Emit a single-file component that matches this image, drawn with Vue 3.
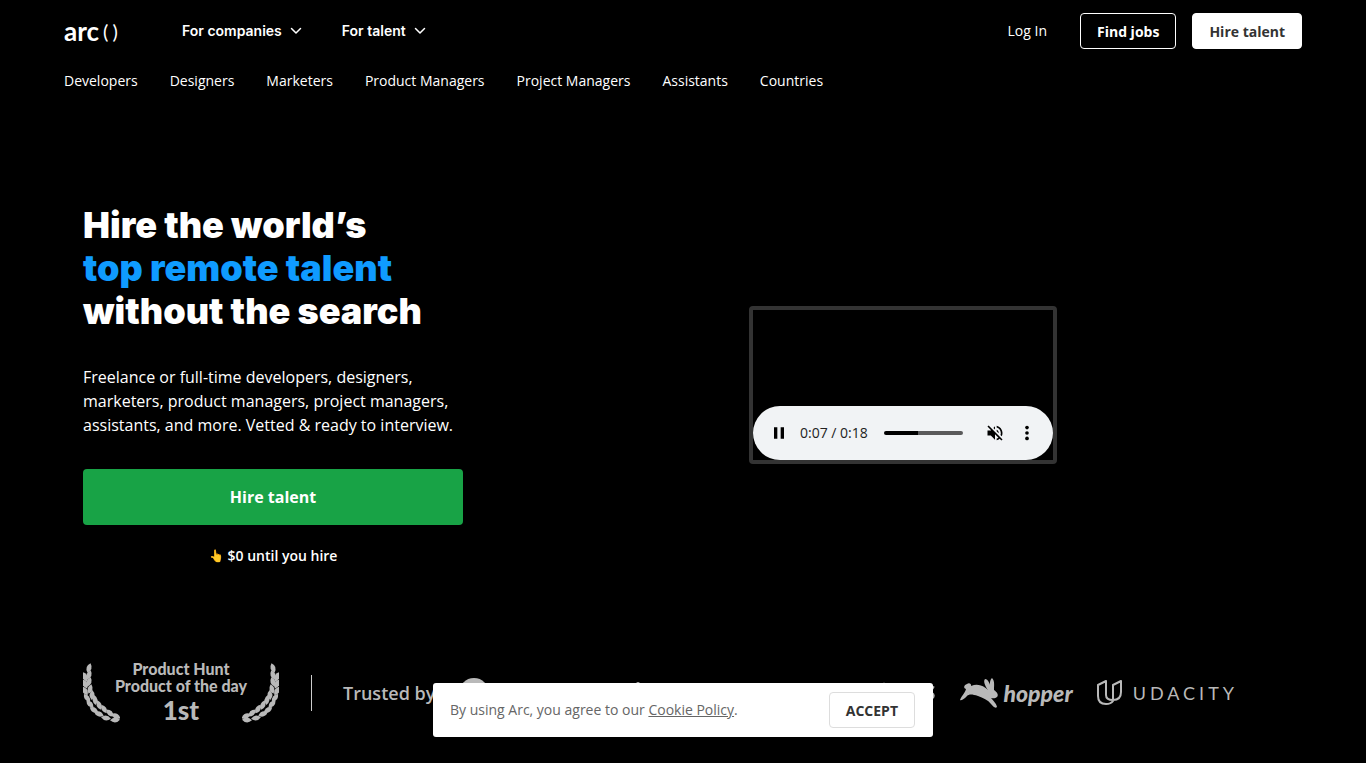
<script setup>
import { ref } from 'vue'

const categories = ['Developers', 'Designers', 'Marketers', 'Product Managers', 'Project Managers', 'Assistants', 'Countries']
const menus = ['For companies', 'For talent']
const progress = ref(43)

// x, y, rotation of each leaf of the laurel branch
const leaves = [
  [6, 5, 18], [6, 12, 20], [2, 14, -20], [6, 19, 20], [2, 21, -24], [7, 26, 16], [2, 28, -30],
  [9, 32, 4], [4, 35, -38], [12, 37, -8], [7, 41, -46], [16, 42, -20], [11, 47, -58],
  [21, 46, -32], [16, 51, -70], [27, 50, -44], [23, 55, -82], [33, 53, -62], [32, 57, -94],
]
</script>

<template>
  <div class="page">
    <header class="header">
      <div class="bar">
        <a class="brand" href="#">arc<span class="parens"><span>(</span><span>)</span></span></a>
        <nav class="menus">
          <button v-for="m in menus" :key="m" class="menu" type="button">
            {{ m }}
            <svg width="12" height="8" viewBox="0 0 12 8" aria-hidden="true">
              <path d="M1.5 1.5 6 6l4.500-4.500" fill="none" stroke="currentColor" stroke-width="1.500" stroke-linecap="round" stroke-linejoin="round" />
            </svg>
          </button>
        </nav>
        <div class="actions">
          <a class="login" href="#">Log In</a>
          <button class="btn outline" type="button">Find jobs</button>
          <button class="btn solid" type="button">Hire talent</button>
        </div>
      </div>
      <nav class="categories">
        <a v-for="c in categories" :key="c" href="#">{{ c }}</a>
      </nav>
    </header>

    <main>
      <section class="hero">
        <div class="pitch">
          <h1>Hire the world’s<br /><span>top remote talent</span><br />without the search</h1>
          <p class="lead">Freelance or full-time developers, designers, marketers, product managers, project managers, assistants, and more. Vetted &amp; ready to interview.</p>
          <button class="cta" type="button">Hire talent</button>
          <p class="note"><span class="emoji">👆</span>$0 until you hire</p>
        </div>
        <div class="media">
          <div class="player">
            <div class="controls">
              <button class="icon pause" type="button" aria-label="Pause">
                <svg width="20" height="20" viewBox="0 0 24 24"><path d="M6 19h4V5H6v14zm8-14v14h4V5h-4z" /></svg>
              </button>
              <span class="time">0:07 / 0:18</span>
              <input v-model="progress" type="range" min="0" max="100" aria-label="Seek" :style="{ '--played': progress + '%' }" />
              <button class="icon mute" type="button" aria-label="Unmute">
                <svg width="20" height="20" viewBox="0 0 24 24"><path d="M4.340 2.930 2.930 4.340 7.290 8.700 7 9H3v6h4l5 5v-6.590l4.180 4.180c-.65.49-1.380.88-2.180 1.110v2.060c1.340-.3 2.570-.92 3.610-1.750l2.050 2.050 1.410-1.410L4.340 2.930zM19 12c0 .82-.15 1.610-.41 2.340l1.530 1.530c.56-1.170.88-2.480.88-3.870 0-4.280-2.990-7.860-7-8.770v2.060c2.890.86 5 3.540 5 6.710zm-7-8-1.880 1.880L12 7.760V4zm4.500 8c0-1.770-1.020-3.290-2.500-4.030v1.790l2.480 2.480c.01-.08.02-.16.02-.24z" /></svg>
              </button>
              <button class="icon" type="button" aria-label="More options">
                <svg width="20" height="20" viewBox="0 0 24 24"><circle cx="12" cy="5.500" r="2.200" /><circle cx="12" cy="12" r="2.200" /><circle cx="12" cy="18.500" r="2.200" /></svg>
              </button>
            </div>
          </div>
        </div>
      </section>

      <section class="proof">
        <div class="award">
          <svg class="laurel" width="37" height="60" viewBox="0 0 37 60" aria-hidden="true">
            <path v-for="(l, i) in leaves" :key="i" d="M0-5Q5 0 0 5Q-5 0 0-5Z" :transform="`translate(${l[0]} ${l[1]}) rotate(${l[2]})`" />
          </svg>
          <div class="award-text">
            <span>Product Hunt</span>
            <span>Product of the day</span>
            <strong>1st</strong>
          </div>
          <svg class="laurel flip" width="37" height="60" viewBox="0 0 37 60" aria-hidden="true">
            <path v-for="(l, i) in leaves" :key="i" d="M0-5Q5 0 0 5Q-5 0 0-5Z" :transform="`translate(${l[0]} ${l[1]}) rotate(${l[2]})`" />
          </svg>
        </div>
        <div class="divider"></div>
        <span class="trusted">Trusted by</span>
        <div class="logos">
          <svg width="30" height="30" viewBox="0 0 30 30" aria-hidden="true"><circle cx="15" cy="15" r="15" /></svg>
          <svg class="second" width="100" height="24" viewBox="0 0 100 24" aria-hidden="true"><circle cx="50" cy="3" r="2" /></svg>
          <svg class="third" width="104" height="24" viewBox="0 0 104 24" aria-hidden="true">
            <path d="m52 1 1 3h3l-2 2 1 3-3-2-3 2 1-3-2-2h3z" />
            <path d="M102 7C96 4 93 11 98 12C104 13 101 20 94 17" fill="none" stroke="currentColor" stroke-width="3" />
          </svg>
          <span class="hopper">
            <svg width="39" height="31" viewBox="0 0 39 31" aria-hidden="true">
              <path d="M0 22C2 17 5 15 6 11C3 10 4 7 7 6C9 4 12 6 11 8C18 5 24 8 28 12C25 8 23 3 25 1C28 1 30 6 31 10C29 6 30 2 32 0C35 3 34 8 34 12C37 14 39 17 37 19C35 21 32 20 31 20C34 23 37 27 37 29C35 31 33 28 31 26C28 22 23 20 18 18C12 16 9 16 7 18C5 20 2 23 0 22Z" />
            </svg>
            hopper
          </span>
          <span class="udacity">
            <svg width="25" height="26" viewBox="0 0 25 26" aria-hidden="true">
              <path d="M1 5 9 1V15Q9 20 16 20V21Q14 24 9 24Q1 24 1 16ZM16 20V5L24 1V12Q24 20 16 20M9 15Q9 20 16 20" />
            </svg>
            UDACITY
          </span>
        </div>
      </section>
    </main>

    <aside class="cookies" aria-label="Cookie notice">
      <p>By using Arc, you agree to our <a href="#">Cookie Policy</a>.</p>
      <button type="button">ACCEPT</button>
    </aside>
  </div>
</template>

<style>
body {
  margin: 0;
  background: #fff;
}
</style>

<style scoped>
.page {
  background: #000;
  color: #fff;
  font-family: "Open Sans", sans-serif;
  font-size: 14px;
  line-height: 20px;
  padding-bottom: 37px;
}
a {
  color: inherit;
  text-decoration: none;
}
button {
  font-family: inherit;
  cursor: pointer;
}
.header {
  padding: 0 64px;
}
.bar {
  display: flex;
  align-items: center;
  height: 62px;
}
.brand {
  display: flex;
  align-items: center;
  gap: 4px;
  width: 118px;
  font-family: Lato, sans-serif;
  font-weight: 700;
  font-size: 26px;
  line-height: 24px;
}
.parens {
  display: flex;
  gap: 4px;
  font-weight: 400;
  font-size: 20px;
}
.menus {
  display: flex;
  gap: 40px;
}
.menu {
  display: flex;
  align-items: center;
  gap: 8px;
  padding: 0;
  border: 0;
  background: none;
  color: #fff;
  font: 600 14px/20px Inter, sans-serif;
}
.actions {
  display: flex;
  align-items: center;
  gap: 16px;
  margin-left: auto;
}
.login {
  margin-right: 17px;
  font-weight: 500;
}
.btn {
  height: 36px;
  padding: 0 16px;
  border: 1px solid #fff;
  border-radius: 4px;
  font-weight: 700;
  font-size: 14px;
}
.outline {
  background: #000;
  color: #fff;
}
.solid {
  background: #fff;
  color: #333;
}
.categories {
  display: flex;
  gap: 32px;
  padding: 9px 0;
}
.hero {
  display: flex;
  align-items: center;
  gap: 60px;
  max-width: 1200px;
  margin: 0 auto;
  padding: 104px 0 94px;
}
.pitch {
  width: 380px;
}
h1 {
  margin: 0 0 32px;
  font: 900 36px/43px Inter, sans-serif;
  white-space: nowrap;
}
h1 span {
  color: #0f9bff;
}
.lead {
  margin: 0 0 32px;
  font-size: 16px;
  line-height: 24px;
}
.cta {
  width: 100%;
  height: 56px;
  border: 0;
  border-radius: 4px;
  background: #18a346;
  color: #fff;
  font-weight: 700;
  font-size: 16px;
}
.note {
  display: flex;
  align-items: center;
  justify-content: center;
  gap: 4px;
  margin: 21px 0 0;
  font-weight: 600;
}
.emoji {
  font-size: 12px;
  line-height: 16px;
}
.media {
  flex: 1;
  display: flex;
  justify-content: center;
}
.player {
  display: flex;
  align-items: flex-end;
  width: 300px;
  height: 150px;
  border: 4px solid #333;
  border-radius: 4px;
}
.controls {
  display: flex;
  align-items: center;
  width: 100%;
  height: 54px;
  box-sizing: border-box;
  padding: 0 16px;
  border-radius: 27px;
  background: #f1f3f5;
  color: #222;
}
.icon {
  display: flex;
  padding: 0;
  border: 0;
  background: none;
}
.pause {
  margin-right: 11px;
}
.mute {
  margin: 0 12px 0 22px;
}
.time {
  white-space: nowrap;
}
input[type="range"] {
  appearance: none;
  flex: 1;
  min-width: 0;
  height: 4px;
  margin: 0 0 0 16px;
  border-radius: 2px;
  background: linear-gradient(to right, #000 var(--played), #5a5a5b var(--played));
}
input[type="range"]::-webkit-slider-thumb {
  appearance: none;
  width: 0;
  height: 4px;
}
.proof {
  display: flex;
  align-items: center;
  max-width: 1200px;
  margin: 0 auto;
  color: #b9b9b9;
}
.proof svg {
  fill: currentColor;
  flex: none;
}
.award {
  display: flex;
  align-items: center;
  justify-content: space-between;
  width: 196px;
}
.flip {
  transform: scaleX(-1);
}
.award-text {
  display: flex;
  flex-direction: column;
  align-items: center;
  margin: 0 -8px;
  font: 900 16px/17px Lato, sans-serif;
  white-space: nowrap;
}
.award-text strong {
  font-weight: 900;
  font-size: 26px;
  line-height: 32px;
}
.divider {
  width: 1px;
  height: 36px;
  margin: 0 31px 0 32px;
  background: #ccc;
}
.trusted {
  font-size: 18px;
  font-weight: 600;
  white-space: nowrap;
}
.logos {
  flex: 1;
  display: flex;
  align-items: center;
  gap: 24px;
  margin: 0 45px 0 24px;
}
.second {
  margin-left: 75px;
}
.third {
  margin-left: auto;
}
.hopper {
  display: flex;
  align-items: center;
  gap: 5px;
  font: italic 900 23px/28px Lato, sans-serif;
}
.udacity {
  display: flex;
  align-items: center;
  gap: 11px;
  font: 400 18px/24px Lato, sans-serif;
  letter-spacing: 4px;
}
.proof .udacity svg {
  fill: none;
  stroke: currentColor;
  stroke-width: 2;
  stroke-linejoin: round;
}
.cookies {
  position: fixed;
  left: 50%;
  bottom: 31px;
  transform: translateX(-50%);
  display: flex;
  align-items: center;
  justify-content: space-between;
  width: 500px;
  height: 54px;
  box-sizing: border-box;
  padding: 0 18px 0 17px;
  border-radius: 3px;
  background: #fff;
  color: #666;
}
.cookies p {
  margin: 0;
}
.cookies a {
  text-decoration: underline;
}
.cookies button {
  height: 36px;
  padding: 0 16px;
  border: 1px solid #ddd;
  border-radius: 4px;
  background: #fff;
  color: #333;
  font-weight: 700;
  font-size: 14px;
}
</style>
